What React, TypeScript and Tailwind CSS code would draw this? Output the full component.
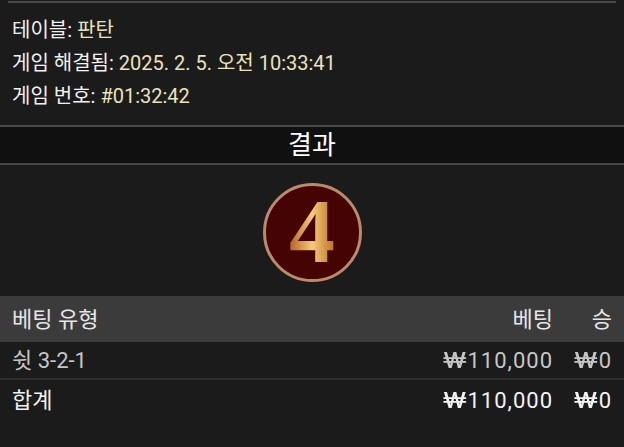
import React from 'react';

interface BetRow {
    type: string;
    bet: string;
    win: string;
}

const rows: BetRow[] = [{ type: '쉿 3-2-1', bet: '110,000', win: '0' }];

const fontStack = "font-['Roboto','Noto_Sans_CJK_KR',sans-serif]";

// won sign in the reference is drawn much wider than Roboto's
const Won: React.FC<{ amount: string }> = ({ amount }) => (
    <span className="whitespace-nowrap tracking-[1px]">
        <span className="inline-block w-[1.05em] text-center">
            <span className="inline-block scale-x-[1.45]">₩</span>
        </span>
        {amount}
    </span>
);

const InfoLine: React.FC<{ label: string; value: string }> = ({ label, value }) => (
    <div className="leading-[33px]">
        <span className="text-[#f2f2f2]">{label}: </span>
        <span className="text-[#ebe3bd]">{value}</span>
    </div>
);

const ResultBall: React.FC<{ value: number }> = ({ value }) => (
    <div className="w-[99px] h-[99px] rounded-full border-[3px] border-[#b98b6b] bg-[#460303] flex items-center justify-center">
        <span className="font-['Liberation_Serif',serif] font-bold text-[92px] leading-none bg-gradient-to-r from-[#b0621a] via-[#f7c979] to-[#b8711e] bg-clip-text text-transparent -mt-1">
            {value}
        </span>
    </div>
);

const App: React.FC = () => {
    return (
        <div className={`w-[624px] h-[447px] bg-[#1b1b1b] overflow-hidden ${fontStack}`}>
            <div className="pt-[1px] px-2">
                <div className="h-[2px] bg-[#4a4a4a]"></div>
            </div>

            <div className="px-3 pt-[11px] pb-[12px] text-[20px]">
                <InfoLine label="테이블" value="판탄" />
                <InfoLine label="게임 해결됨" value="2025. 2. 5. 오전 10:33:41" />
                <InfoLine label="게임 번호" value="#01:32:42" />
            </div>

            <div className="border-y-2 border-[#474747] bg-[#101010] h-[40px] flex items-center justify-center text-[26px] text-white">
                결과
            </div>

            <div className="flex justify-center pt-[18px] pb-[14px]">
                <ResultBall value={4} />
            </div>

            <div className="grid grid-cols-[1fr_auto_71px] text-[22px]">
                <div className="contents text-[#e6e6e6]">
                    <div className="bg-[#3b3b3b] h-[46px] flex items-center pl-3">베팅 유형</div>
                    <div className="bg-[#3b3b3b] h-[46px] flex items-center justify-end">베팅</div>
                    <div className="bg-[#3b3b3b] h-[46px] flex items-center justify-end pr-3">승</div>
                </div>
                {rows.map((row) => (
                    <div key={row.type} className="contents text-[#c6c6c6]">
                        <div className="h-[38px] flex items-center pl-3 border-b-2 border-[#2e2e2e]">{row.type}</div>
                        <div className="h-[38px] flex items-center justify-end border-b-2 border-[#2e2e2e]">
                            <Won amount={row.bet} />
                        </div>
                        <div className="h-[38px] flex items-center justify-end pr-3 border-b-2 border-[#2e2e2e]">
                            <Won amount={row.win} />
                        </div>
                    </div>
                ))}
                <div className="contents text-[#f2f2f2]">
                    <div className="h-[40px] flex items-center pl-3">합계</div>
                    <div className="h-[40px] flex items-center justify-end">
                        <Won amount="110,000" />
                    </div>
                    <div className="h-[40px] flex items-center justify-end pr-3">
                        <Won amount="0" />
                    </div>
                </div>
            </div>
        </div>
    );
};

export default App;
